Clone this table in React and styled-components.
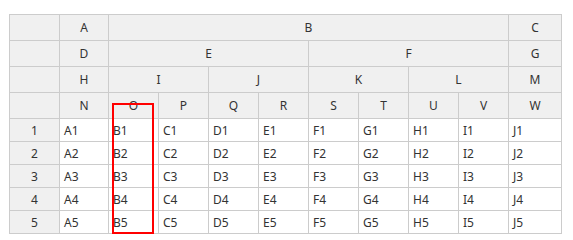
import styled, { createGlobalStyle } from "styled-components";

const Global = createGlobalStyle`
  body {
    margin: 0;
    background: #fff;
    font-family: "Noto Sans", "Open Sans", sans-serif;
  }
`;

const Page = styled.div`
  padding: 14px 0 0 9px;
`;

const Wrap = styled.div`
  position: relative;
  display: inline-block;
`;

const Grid = styled.table`
  border-collapse: collapse;
  table-layout: fixed;
  font-size: 12px;
  color: #333;
`;

const Head = styled.th`
  height: 25px;
  padding: 0;
  border: 1px solid #ccc;
  background: #f0f0f0;
  font-weight: normal;
  text-align: center;
`;

const RowNum = styled.td`
  height: 22px;
  padding: 0;
  border: 1px solid #ccc;
  background: #f0f0f0;
  text-align: center;
`;

const Cell = styled.td`
  height: 22px;
  padding: 0 4px;
  border: 1px solid #ccc;
  background: #fff;
`;

const Selection = styled.div`
  position: absolute;
  left: 103px;
  top: 89px;
  width: 38px;
  height: 127px;
  border: 2px solid #ff0000;
  pointer-events: none;
`;

const widths = [50, 49, 50, 50, 50, 50, 50, 50, 50, 50, 53];
const letters = ["A", "B", "C", "D", "E", "F", "G", "H", "I", "J"];

const headerRows = [
  [["", 1], ["A", 1], ["B", 8], ["C", 1]],
  [["", 1], ["D", 1], ["E", 4], ["F", 4], ["G", 1]],
  [["", 1], ["H", 1], ["I", 2], ["J", 2], ["K", 2], ["L", 2], ["M", 1]],
  [["", 1], ["N", 1], ["O", 1], ["P", 1], ["Q", 1], ["R", 1], ["S", 1], ["T", 1], ["U", 1], ["V", 1], ["W", 1]],
];

export default function App() {
  return (
    <>
      <Global />
      <Page>
        <Wrap>
          <Grid>
            <colgroup>
              {widths.map((w, i) => (
                <col key={i} style={{ width: w }} />
              ))}
            </colgroup>
            <thead>
              {headerRows.map((row, r) => (
                <tr key={r}>
                  {row.map(([label, span], c) => (
                    <Head key={c} colSpan={span}>
                      {label}
                    </Head>
                  ))}
                </tr>
              ))}
            </thead>
            <tbody>
              {[1, 2, 3, 4, 5].map((n) => (
                <tr key={n}>
                  <RowNum>{n}</RowNum>
                  {letters.map((l) => (
                    <Cell key={l}>
                      {l}
                      {n}
                    </Cell>
                  ))}
                </tr>
              ))}
            </tbody>
          </Grid>
          <Selection />
        </Wrap>
      </Page>
    </>
  );
}
